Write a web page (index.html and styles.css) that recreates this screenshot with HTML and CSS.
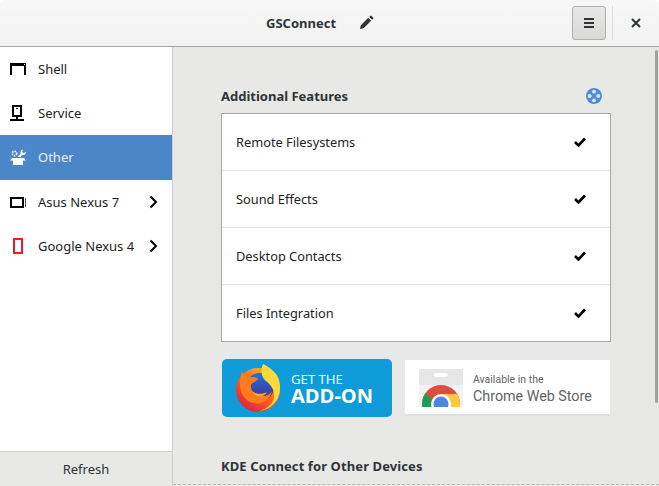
FILE: index.html
```html
<!DOCTYPE html>
<html lang="en">
<head>
<meta charset="utf-8">
<title>GSConnect</title>
<link rel="stylesheet" href="styles.css">
</head>
<body>
<div class="window">
  <header class="titlebar">
    <div class="title-group">
      <span class="title">GSConnect</span>
      <svg class="pencil" width="16" height="16" viewBox="0 0 16 16"><path d="M2 14l.7-3.600 7.600-7.600 2.900 2.900-7.600 7.600zM11.200 1.900l1-1a1 1 0 0 1 1.400 0l1.500 1.500a1 1 0 0 1 0 1.400l-1 1z" fill="#2e3436"/></svg>
    </div>
    <div class="actions">
      <button class="menu-btn"><span></span><span></span><span></span></button>
      <div class="sep"></div>
      <svg class="close" width="10" height="10" viewBox="0 0 10 10"><path d="M1 1l8 8M9 1l-8 8" stroke="#2e3436" stroke-width="2" fill="none"/></svg>
    </div>
  </header>
  <div class="content">
    <aside class="sidebar">
      <nav class="nav">
        <div class="nav-row">
          <svg class="nav-icon" width="16" height="16" viewBox="0 0 16 16"><path d="M0 14V2h16v12h-2V5H2v9z" fill="#000"/><rect x="14" y="3" width="1" height="1" fill="#fff"/></svg>
          <span>Shell</span>
        </div>
        <div class="nav-row">
          <svg class="nav-icon" width="16" height="16" viewBox="0 0 16 16"><rect x="3" y="1" width="8" height="10" fill="none" stroke="#000" stroke-width="2"/><path d="M6 3h2v1H6zM6 12h2v2H6zM0 14h14v2H0z" fill="#000"/></svg>
          <span>Service</span>
        </div>
        <div class="nav-row active">
          <svg class="nav-icon" width="16" height="16" viewBox="0 0 16 16" fill="#fff"><path d="M2 9h12l2 2.500h-3V16H3v-4.500H0z"/><circle cx="4.500" cy="4.500" r="2.200" fill="none" stroke="#fff" stroke-width="1.600" stroke-dasharray="1.500 .8"/><path d="M7.500 8l3.300-3.500a3 3 0 0 1 .5-3.300l1.700-.7-.8 2.500 1.400 1.200 2.200-1.500a3 3 0 0 1-3.900 3.300L10.500 8z"/></svg>
          <span>Other</span>
        </div>
        <div class="nav-row">
          <svg class="nav-icon" width="16" height="16" viewBox="0 0 16 16"><rect x="1" y="4" width="12" height="9" fill="none" stroke="#000" stroke-width="2"/><rect x="15" y="4" width="1" height="9" fill="#555"/></svg>
          <span class="grow">Asus Nexus 7</span>
          <svg class="chev" width="9" height="14" viewBox="0 0 9 14"><path d="M1.500 1.500L7 7l-5.500 5.500" fill="none" stroke="#000" stroke-width="2"/></svg>
        </div>
        <div class="nav-row">
          <svg class="nav-icon" width="16" height="16" viewBox="0 0 16 16"><rect x="4" y="1" width="8" height="14" fill="none" stroke="#f01c1c" stroke-width="2"/></svg>
          <span class="grow">Google Nexus 4</span>
          <svg class="chev" width="9" height="14" viewBox="0 0 9 14"><path d="M1.500 1.500L7 7l-5.500 5.500" fill="none" stroke="#000" stroke-width="2"/></svg>
        </div>
      </nav>
      <div class="refresh">Refresh</div>
    </aside>
    <main class="main">
      <div class="section-head">
        <h2 class="section-title">Additional Features</h2>
        <svg class="help" width="16" height="16" viewBox="0 0 16 16"><circle cx="8" cy="8" r="8" fill="#4a90d9"/><circle cx="8" cy="3.700" r="1.900" fill="#e8e8e7"/><circle cx="8" cy="12.300" r="1.900" fill="#e8e8e7"/><circle cx="3.700" cy="8" r="1.900" fill="#e8e8e7"/><circle cx="12.300" cy="8" r="1.900" fill="#e8e8e7"/></svg>
      </div>
      <div class="list">
        <div class="list-row"><span>Remote Filesystems</span><svg class="check" width="12" height="10" viewBox="0 0 12 10"><path d="M1 5l3.500 3.500L11 1.500" fill="none" stroke="#000" stroke-width="2.600"/></svg></div>
        <div class="list-row"><span>Sound Effects</span><svg class="check" width="12" height="10" viewBox="0 0 12 10"><path d="M1 5l3.500 3.500L11 1.500" fill="none" stroke="#000" stroke-width="2.600"/></svg></div>
        <div class="list-row"><span>Desktop Contacts</span><svg class="check" width="12" height="10" viewBox="0 0 12 10"><path d="M1 5l3.500 3.500L11 1.500" fill="none" stroke="#000" stroke-width="2.600"/></svg></div>
        <div class="list-row"><span>Files Integration</span><svg class="check" width="12" height="10" viewBox="0 0 12 10"><path d="M1 5l3.500 3.500L11 1.500" fill="none" stroke="#000" stroke-width="2.600"/></svg></div>
      </div>
      <div class="badges">
        <div class="badge-ff">
          <svg class="ff-logo" width="46" height="48" viewBox="0 0 46 48">
            <defs>
              <linearGradient id="ffa" x1="0.800" y1="0.100" x2="0.200" y2="0.900"><stop offset="0" stop-color="#ffb52e"/><stop offset=".45" stop-color="#ff6a1c"/><stop offset="1" stop-color="#e3233e"/></linearGradient>
              <linearGradient id="ffb" x1="0.500" y1="0" x2="0.500" y2="1"><stop offset="0" stop-color="#1c74d8"/><stop offset="1" stop-color="#4a2a8f"/></linearGradient>
            </defs>
            <circle cx="23" cy="26" r="22" fill="url(#ffa)"/>
            <circle cx="25" cy="23" r="14" fill="url(#ffb)"/>
            <path d="M28 0c8 4 14 9 16 16 2 8 1 15-3 21-4 6-10 9-16 10 8-3 13-7 14-14 1-7-3-12-8-16-4-3-6-10-3-17z" fill="#ffd83a"/>
            <path d="M7 7c1 3 3 5 7 6 4 0 8 0 9 2-2 3-6 3-7 6-1 4 2 8 6 10 6 2 12 1 15-4-2 10-13 15-22 11C7 34 2 24 7 7z" fill="#ff7c1d"/>
            <path d="M17 27c4 3 10 4 15 1-3 6-11 6-15-1z" fill="#ffa52b"/>
          </svg>
          <div class="ff-text"><span class="ff-small">GET THE</span><span class="ff-big">ADD-ON</span></div>
        </div>
        <div class="badge-cws">
          <svg class="cws-logo" width="44" height="38" viewBox="0 0 44 38">
            <defs>
              <clipPath id="ring"><circle cx="22" cy="35" r="19"/></clipPath>
            </defs>
            <path d="M1 0h42a1 1 0 0 1 1 1v15H0V1a1 1 0 0 1 1-1z" fill="#e6e6e6"/>
            <path d="M0 16h44v21a1 1 0 0 1-1 1H1a1 1 0 0 1-1-1z" fill="#f2f2f2"/>
            <rect x="15" y="4" width="14" height="4" rx="2" fill="#fff"/>
            <g clip-path="url(#ring)">
              <rect x="0" y="14" width="44" height="24" fill="#db4d3e"/>
              <path d="M22 25h22v13H22z" fill="#fdc93f"/>
              <path d="M0 22L7 24l7 8v6H0z" fill="#1f9d55"/>
            </g>
            <circle cx="22" cy="35" r="10" fill="#fff"/>
            <circle cx="22" cy="35" r="7.500" fill="#4a86e8"/>
          </svg>
          <div class="cws-text"><span class="cws-small">Available in the</span><span class="cws-big">Chrome Web Store</span></div>
        </div>
      </div>
      <h2 class="section-title lower">KDE Connect for Other Devices</h2>
      <div class="scrollbar"></div>
      <div class="dash"></div>
    </main>
  </div>
</div>
</body>
</html>
```
FILE: styles.css
```css
* { box-sizing: border-box; }
html, body { margin: 0; height: 100%; overflow: hidden; background: #fff; }
body { font-family: "Noto Sans", sans-serif; font-size: 13px; color: #2e3436; }
.window { height: 486px; display: flex; flex-direction: column; }
.titlebar { height: 47px; flex: none; background: linear-gradient(#f7f7f7, #f2f2f2); border-bottom: 1px solid #a5a5a0; border-radius: 6px 6px 0 0; position: relative; display: flex; justify-content: flex-end; align-items: center; }
.title-group { position: absolute; left: 266px; top: 14px; display: flex; align-items: center; gap: 22px; }
.title { font-weight: 700; font-size: 13px; line-height: 18px; color: #2e3436; }
.pencil { display: block; margin-top: -1px; }
.actions { display: flex; align-items: center; height: 34px; margin-top: -1px; padding-right: 18px; }
.menu-btn { width: 34px; height: 34px; padding: 0; border: 1px solid #b0aeab; border-radius: 3px; background: linear-gradient(#e8e8e7, #d8d8d6); display: flex; flex-direction: column; align-items: center; justify-content: center; gap: 2px; }
.menu-btn span { display: block; width: 10px; height: 2px; background: #2e3436; }
.sep { width: 1px; height: 34px; background: #dcdcda; margin: 0 18px 0 6px; }
.close { display: block; }
.content { flex: 1; display: flex; min-height: 0; }
.sidebar { width: 173px; flex: none; border-right: 1px solid #cdcdcb; background: #fff; display: flex; flex-direction: column; }
.nav { flex: 1; }
.nav-row { height: 44.2px; display: flex; align-items: center; padding: 0 14px 0 10px; color: #1d1d1d; gap: 12px; }
.nav-row.active { background: #4a86c8; color: #e9f0f8; }
.nav-icon { flex: none; display: block; }
.grow { flex: 1; }
.chev { flex: none; display: block; }
.refresh { height: 35px; flex: none; border-top: 1px solid #cdcdcb; background: #e8e8e7; display: flex; align-items: center; justify-content: center; color: #2e3436; }
.main { flex: 1; min-width: 0; position: relative; overflow: hidden; background: #e8e8e7; padding: 40px 48px 0 48px; }
.section-head { display: flex; justify-content: space-between; align-items: center; height: 18px; margin-bottom: 8px; padding-right: 9px; }
.section-title { margin: 0; font-size: 13px; line-height: 18px; font-weight: 700; color: #2e3436; }
.help { display: block; }
.list { background: #fff; border: 1px solid #a8a8a6; }
.list-row { height: 57px; display: flex; align-items: center; justify-content: space-between; padding: 0 24px 0 14px; border-bottom: 1px solid #e4e4e3; color: #1f2224; font-size: 12.8px; }
.list-row:last-child { border-bottom: 0; height: 56px; }
.check { display: block; }
.badges { display: flex; gap: 13px; margin-top: 17px; padding-left: 1px; }
.badge-ff { width: 170px; height: 58px; background: #0f9bd7; border-radius: 5px; display: flex; align-items: center; padding-left: 13px; gap: 10px; color: #fff; }
.ff-logo { display: block; flex: none; }
.ff-text { display: flex; flex-direction: column; font-family: "Open Sans", sans-serif; padding-top: 2px; }
.ff-small { font-size: 13.200px; line-height: 14px; }
.ff-big { font-size: 20px; line-height: 20px; font-weight: 700; }
.badge-cws { width: 205px; height: 56px; margin-top: 1px; background: #fff; border-bottom: 2px solid #dfdfde; display: flex; align-items: center; padding-left: 14px; gap: 10px; }
.cws-logo { display: block; flex: none; margin-top: 2px; }
.cws-text { display: flex; flex-direction: column; color: #5f6368; font-family: "Roboto", sans-serif; padding-top: 3px; }
.cws-small { font-size: 10.500px; line-height: 15px; }
.cws-big { font-size: 14.300px; line-height: 18px; }
.lower { margin-top: 40px; letter-spacing: .1px; }
.scrollbar { position: absolute; top: 3px; right: 1px; width: 3px; height: 353px; background: #a0a09e; border-radius: 2px; }
.dash { position: absolute; left: 0; right: 0; bottom: 1px; border-bottom: 1px dashed #b5b5b3; }
```
